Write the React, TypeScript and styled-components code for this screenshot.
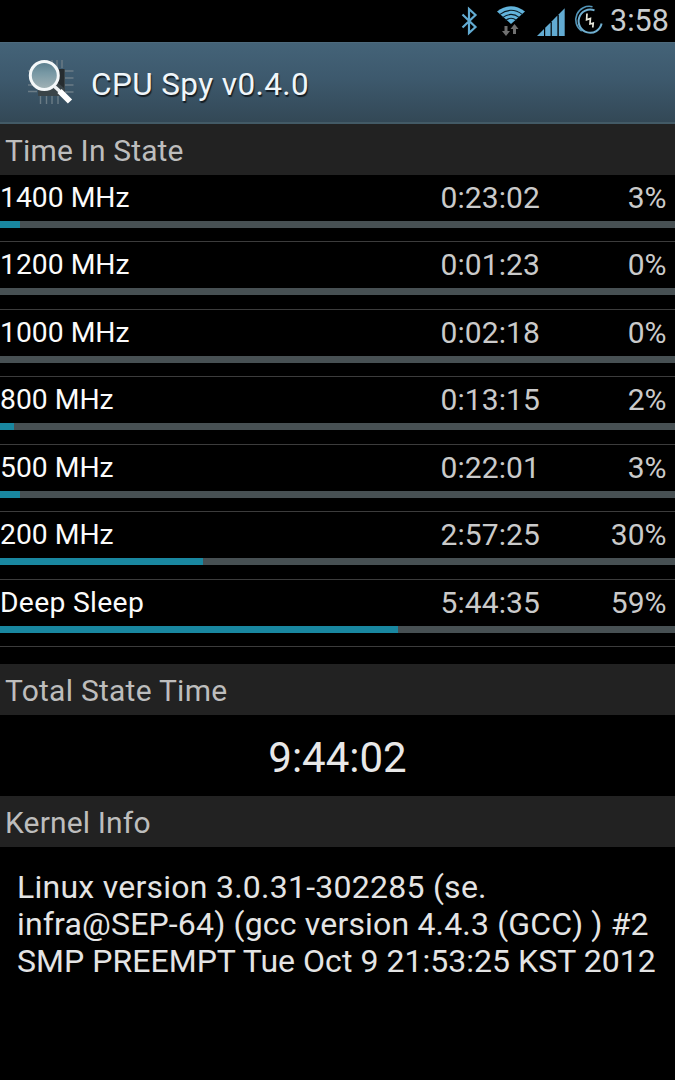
import React from "react";
import styled, { createGlobalStyle } from "styled-components";

const GlobalStyle = createGlobalStyle`
  html, body { margin: 0; background: #000; }
  body { font-family: Roboto, "Liberation Sans", sans-serif; }
`;

const Screen = styled.main`
  width: 675px;
  height: 1080px;
  overflow: hidden;
  background: #000;
  display: flex;
  flex-direction: column;
`;

const StatusBar = styled.header`
  height: 42px;
  flex: none;
  display: flex;
  justify-content: flex-end;
`;

const StatusIcons = styled.svg`
  width: 150px;
  height: 42px;
`;

const Clock = styled.span`
  width: 70px;
  padding-left: 5px;
  box-sizing: border-box;
  color: #c9cdcf;
  font-size: 30.5px;
  line-height: 42px;
  white-space: nowrap;
`;

const ActionBar = styled.div`
  height: 82px;
  flex: none;
  box-sizing: border-box;
  display: flex;
  align-items: center;
  padding: 1px 0 0 24px;
  border-top: 1px solid #4d6a7d;
  border-bottom: 2px solid #435a66;
  background: linear-gradient(#446378, #3d596d 45%, #334856);
`;

const AppIcon = styled.svg`
  width: 54px;
  height: 54px;
`;

const Title = styled.h1`
  margin: 3px 0 0 13px;
  color: #f0f6fa;
  font-size: 31.5px;
  font-weight: 400;
  letter-spacing: 0.4px;
  line-height: 40px;
  text-shadow: 1px 2px 1px rgba(0, 0, 0, 0.65);
`;

const SectionHeading = styled.h2<{ $spacing?: number }>`
  margin: 0;
  height: 51px;
  flex: none;
  padding-left: 5px;
  background: #222;
  color: #bdbdbd;
  font-size: 30px;
  font-weight: 400;
  line-height: 53px;
  letter-spacing: ${(p) => p.$spacing ?? 0}px;
`;

const StateList = styled.ul`
  margin: -0.5px 0 0;
  padding: 0;
  height: 489.5px;
  flex: none;
  list-style: none;
`;

const StateRow = styled.li`
  height: 67.5px;
  box-sizing: border-box;
  border-bottom: 1px solid #3c3c3c;
`;

const StateLine = styled.div`
  height: 46px;
  display: grid;
  grid-template-columns: 440.5px 110px 116px;
  font-size: 30px;
  line-height: 45px;
  white-space: nowrap;
`;

const Frequency = styled.span<{ $spacing?: number }>`
  color: #fbfbfb;
  font-size: 28.3px;
  line-height: 46px;
  letter-spacing: ${(p) => p.$spacing ?? 0}px;
`;

const Duration = styled.span`
  color: #cacaca;
  letter-spacing: 0.1px;
`;

const Percent = styled.span`
  color: #cacaca;
  text-align: right;
`;

const Track = styled.div`
  height: 7px;
  background: #475053;
`;

const Fill = styled.div`
  height: 100%;
  background: #1987a0;
`;

const Total = styled.div`
  height: 81px;
  flex: none;
  text-align: center;
  color: #e8e8e8;
  font-size: 42px;
  line-height: 86px;
`;

const Kernel = styled.p`
  margin: 0;
  padding: 22px 0 0 17px;
  color: #e4e4e4;
  font-size: 32px;
  line-height: 37px;
`;

const KernelLine = styled.span<{ $spacing?: number }>`
  display: block;
  white-space: nowrap;
  letter-spacing: ${(p) => p.$spacing ?? 0}px;
`;

const states = [
  { name: "1400 MHz", time: "0:23:02", percent: 3 },
  { name: "1200 MHz", time: "0:01:23", percent: 0 },
  { name: "1000 MHz", time: "0:02:18", percent: 0 },
  { name: "800 MHz", time: "0:13:15", percent: 2 },
  { name: "500 MHz", time: "0:22:01", percent: 3 },
  { name: "200 MHz", time: "2:57:25", percent: 30 },
  { name: "Deep Sleep", time: "5:44:35", percent: 59, spacing: 0.3 },
];

const Status = () => (
  <StatusIcons viewBox="455 0 150 42" fill="none">
    <path d="M462.5 14.5 L475.5 27 L469 33 V9 L475.5 15 L462.5 27.5" stroke="#62abd2" strokeWidth="2.2" />
    <path d="M511 24 L497 11.5 Q511 1 525 11.5 Z" fill="#62b4dc" />
    <g stroke="#0b1b24" strokeWidth="1.1">
      <path d="M499.5 14.6 Q511 6 522.5 14.6" />
      <path d="M502.5 17.6 Q511 11.2 519.5 17.6" />
      <path d="M505.5 20.4 Q511 16.2 516.5 20.4" />
    </g>
    <g fill="#707070">
      <path d="M504.5 26 h3 v5 h2.5 l-4 5 l-4 -5 h2.5 z" />
      <path d="M513 34 h3 v-5 h2.5 l-4 -5 l-4 5 h2.5 z" />
    </g>
    <g fill="#62abd2">
      <path d="M537 36 L544 29 V36 Z" />
      <path d="M545.2 27.8 L550.6 22.4 V36 H545.2 Z" />
      <path d="M551.8 21.2 L557.4 15.6 V36 H551.8 Z" />
      <path d="M558.8 14.2 L564.7 8.3 V36 H558.8 Z" />
    </g>
    <path d="M592.5 6.7 A13.5 13.5 0 0 0 581.7 31" stroke="#5295b8" strokeWidth="1.6" />
    <path d="M594.5 10.4 A11.6 11.6 0 1 0 601.6 23.5" stroke="#70afd0" strokeWidth="2" />
    <path d="M587 13.5 L586.6 19.8 L590.4 18.4 L590 24 L593.2 23.2 L592.8 27.5" stroke="#e9e9dc" strokeWidth="1.7" />
  </StatusIcons>
);

const CpuSearch = () => (
  <AppIcon viewBox="24 56 54 54" fill="none">
    <rect x="38" y="69" width="27" height="27" fill="#3a4448" />
    <path d="M55 69 H64 V88 L57 82 Z" fill="#262c2f" />
    <g stroke="#6b7c86" strokeWidth="1.4">
      <path d="M40.5 96 V104 M46.5 96 V104 M52 96 V104 M58 96 V104" />
      <path d="M46.5 60 V68 M52 60 V68 M57 60 V68 M62 60 V68" />
      <path d="M65 71 H73.5 M65 78 H73.5 M65 85 H73.5 M65 92 H73.5" />
      <path d="M28 71 H37 M28 85 H37 M28 91.5 H37" />
    </g>
    <circle cx="44.3" cy="75.5" r="14" fill="url(#lens)" stroke="#f4f8f9" strokeWidth="3" />
    <path d="M54.5 86.5 L60 91.5" stroke="#eff3f4" strokeWidth="3.5" />
    <path d="M59.5 91 L70 101.5" stroke="#fff" strokeWidth="6" />
    <defs>
      <linearGradient id="lens" x1="0" y1="0" x2="0" y2="1">
        <stop offset="0" stopColor="#587c8b" />
        <stop offset="0.4" stopColor="#7798a4" />
        <stop offset="1" stopColor="#a3b3b6" />
      </linearGradient>
    </defs>
  </AppIcon>
);

export default function App() {
  return (
    <Screen>
      <GlobalStyle />
      <StatusBar>
        <Status />
        <Clock>3:58</Clock>
      </StatusBar>
      <ActionBar>
        <CpuSearch />
        <Title>CPU Spy v0.4.0</Title>
      </ActionBar>
      <SectionHeading $spacing={0.15}>Time In State</SectionHeading>
      <StateList>
        {states.map((s) => (
          <StateRow key={s.name}>
            <StateLine>
              <Frequency $spacing={s.spacing}>{s.name}</Frequency>
              <Duration>{s.time}</Duration>
              <Percent>{s.percent}%</Percent>
            </StateLine>
            <Track>
              <Fill style={{ width: `${s.percent}%` }} />
            </Track>
          </StateRow>
        ))}
      </StateList>
      <SectionHeading $spacing={0.25}>Total State Time</SectionHeading>
      <Total>9:44:02</Total>
      <SectionHeading $spacing={0.15}>Kernel Info</SectionHeading>
      <Kernel>
        <KernelLine $spacing={0.25}>Linux version 3.0.31-302285 (se.</KernelLine>
        <KernelLine $spacing={0.17}>infra@SEP-64) (gcc version 4.4.3 (GCC) ) #2</KernelLine>
        <KernelLine $spacing={0.04}>SMP PREEMPT Tue Oct 9 21:53:25 KST 2012</KernelLine>
      </Kernel>
    </Screen>
  );
}
